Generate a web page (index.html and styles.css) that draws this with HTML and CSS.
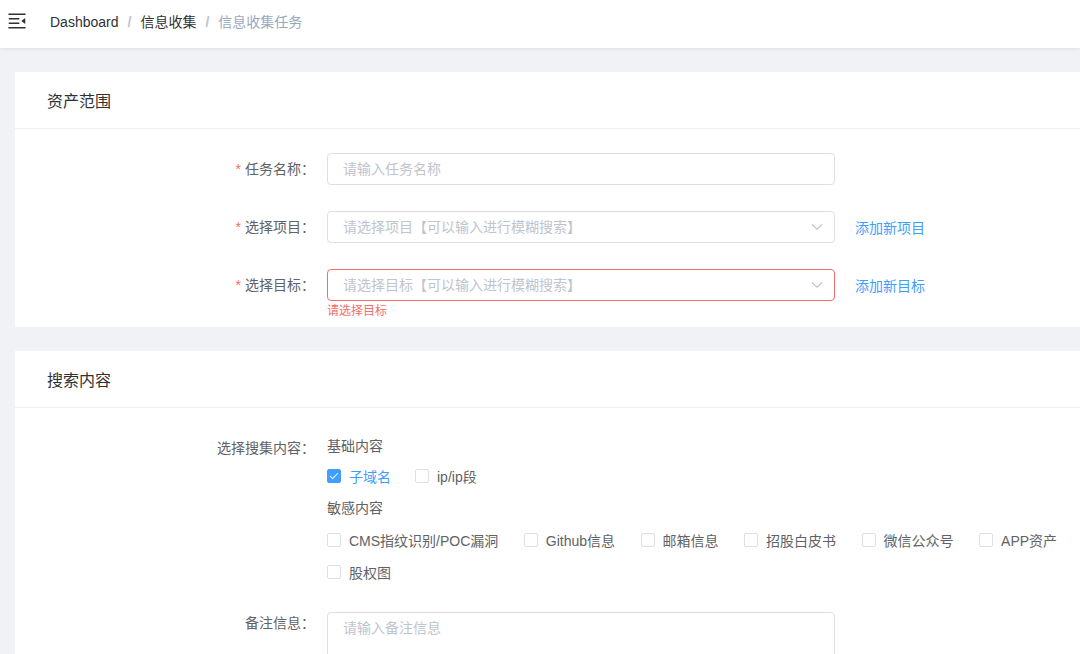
FILE: index.html
```html
<!DOCTYPE html>
<html lang="zh-CN">
<head>
<meta charset="utf-8">
<title>信息收集任务</title>
<link rel="stylesheet" href="styles.css">
</head>
<body>
<header class="navbar">
  <div class="hamburger">
    <svg class="hamburger-icon" viewBox="0 0 1024 1024" width="22" height="22">
      <path d="M408 442h480c4.4 0 8-3.6 8-8v-56c0-4.4-3.6-8-8-8H408c-4.4 0-8 3.6-8 8v56c0 4.4 3.6 8 8 8zm-8 204c0 4.4 3.6 8 8 8h480c4.4 0 8-3.6 8-8v-56c0-4.4-3.6-8-8-8H408c-4.4 0-8 3.6-8 8v56zm504-486H120c-4.4 0-8 3.6-8 8v56c0 4.4 3.6 8 8 8h784c4.4 0 8-3.6 8-8v-56c0-4.4-3.6-8-8-8zm0 632H120c-4.4 0-8 3.6-8 8v56c0 4.4 3.6 8 8 8h784c4.4 0 8-3.6 8-8v-56c0-4.4-3.6-8-8-8zM142.4 642.1L298.7 519a8.84 8.84 0 0 0 0-13.9L142.4 381.9c-5.8-4.6-14.4-.5-14.4 6.9v246.3a8.9 8.9 0 0 0 14.4 7z"/>
    </svg>
  </div>
  <nav class="breadcrumb">
    <span class="crumb">Dashboard</span><span class="sep">/</span><span class="crumb">信息收集</span><span class="sep">/</span><span class="crumb crumb-last">信息收集任务</span>
  </nav>
</header>

<main class="main">
  <section class="card">
    <div class="card-header">资产范围</div>
    <div class="card-body">
      <div class="form-item">
        <label class="form-label"><span class="req">*</span>任务名称：</label>
        <div class="form-content">
          <input class="el-input" type="text" placeholder="请输入任务名称">
        </div>
      </div>
      <div class="form-item">
        <label class="form-label"><span class="req">*</span>选择项目：</label>
        <div class="form-content row">
          <div class="select">
            <input class="el-input select-input" type="text" placeholder="请选择项目【可以输入进行模糊搜索】">
            <svg class="select-arrow" viewBox="0 0 12 8" width="12" height="8"><path d="M1 1.5 L6 6.2 L11 1.5" fill="none" stroke="#c0c4cc" stroke-width="1.2"/></svg>
          </div>
          <a class="link">添加新项目</a>
        </div>
      </div>
      <div class="form-item is-error">
        <label class="form-label"><span class="req">*</span>选择目标：</label>
        <div class="form-content">
          <div class="row">
            <div class="select">
              <input class="el-input select-input" type="text" placeholder="请选择目标【可以输入进行模糊搜索】">
              <svg class="select-arrow" viewBox="0 0 12 8" width="12" height="8"><path d="M1 1.5 L6 6.2 L11 1.5" fill="none" stroke="#c0c4cc" stroke-width="1.2"/></svg>
            </div>
            <a class="link">添加新目标</a>
          </div>
          <div class="error-msg">请选择目标</div>
        </div>
      </div>
    </div>
  </section>

  <section class="card">
    <div class="card-header">搜索内容</div>
    <div class="card-body">
      <div class="form-item form-item-checks">
        <label class="form-label">选择搜集内容：</label>
        <div class="form-content">
          <div class="group-title first">基础内容</div>
          <div class="checks">
            <label class="cb cb-checked"><span class="cb-box"></span><span class="cb-text">子域名</span></label>
            <label class="cb"><span class="cb-box"></span><span class="cb-text">ip/ip段</span></label>
          </div>
          <div class="group-title">敏感内容</div>
          <div class="checks checks-wide">
            <label class="cb"><span class="cb-box"></span><span class="cb-text">CMS指纹识别/POC漏洞</span></label>
            <label class="cb"><span class="cb-box"></span><span class="cb-text">Github信息</span></label>
            <label class="cb"><span class="cb-box"></span><span class="cb-text">邮箱信息</span></label>
            <label class="cb"><span class="cb-box"></span><span class="cb-text">招股白皮书</span></label>
            <label class="cb"><span class="cb-box"></span><span class="cb-text">微信公众号</span></label>
            <label class="cb"><span class="cb-box"></span><span class="cb-text">APP资产</span></label>
            <label class="cb"><span class="cb-box"></span><span class="cb-text">股权图</span></label>
          </div>
        </div>
      </div>
      <div class="form-item">
        <label class="form-label form-label-low">备注信息：</label>
        <div class="form-content textarea-wrap">
          <textarea class="el-textarea" placeholder="请输入备注信息"></textarea>
        </div>
      </div>
    </div>
  </section>
</main>
</body>
</html>
```

FILE: styles.css
```css
html, body {
  margin: 0;
  padding: 0;
  overflow: hidden;
}

body {
  background: #f0f2f5;
  font-family: "Liberation Sans", "Noto Sans CJK SC", sans-serif;
  font-size: 14px;
  color: #606266;
}

.navbar {
  height: 48px;
  background: #fff;
  box-shadow: 0 1px 4px rgba(0, 21, 41, 0.08);
  display: flex;
  align-items: flex-start;
  padding-left: 6px;
  position: relative;
  z-index: 2;
}

.hamburger {
  padding-top: 10px;
  height: 22px;
}

.hamburger-icon {
  display: block;
  fill: #303133;
  transform: rotate(180deg);
}

.breadcrumb {
  margin-left: 22px;
  line-height: 44px;
  font-size: 14px;
}

.crumb {
  color: #303133;
}

.crumb-last {
  color: #97a8be;
}

.sep {
  margin: 0 9px;
  color: #c0c4cc;
  font-weight: 700;
}

.main {
  padding: 24px 0 0 15px;
}

.card {
  display: flow-root;
  background: #fff;
  margin-bottom: 24px;
}

.card-header {
  height: 52px;
  line-height: 52px;
  padding: 4px 0 0 32px;
  font-size: 16px;
  color: #303133;
  border-bottom: 1px solid #ebeef5;
}

.card-body {
  display: flow-root;
  padding-top: 24px;
}

.form-item {
  display: flex;
  margin-bottom: 26px;
}

.form-item.is-error {
  margin-bottom: 10px;
}

.form-item-checks {
  margin-bottom: 17px;
}

.form-label {
  width: 312px;
  flex-shrink: 0;
  box-sizing: border-box;
  padding-right: 12px;
  text-align: right;
  line-height: 32px;
  font-size: 14px;
  color: #606266;
}

.form-label-low {
  padding-top: 2px;
}

.req {
  color: #f56c6c;
  margin-right: 4px;
}

.form-content {
  flex: 1;
  min-width: 0;
}

.row {
  display: flex;
  align-items: center;
}

.el-input {
  display: block;
  width: 508px;
  height: 32px;
  box-sizing: border-box;
  border: 1px solid #dcdfe6;
  border-radius: 4px;
  padding: 0 15px;
  font-family: inherit;
  font-size: 14px;
  color: #606266;
  background: #fff;
  outline: none;
}

.el-input::placeholder,
.el-textarea::placeholder {
  color: #c0c4cc;
}

.is-error .el-input {
  border-color: #f56c6c;
}

.select {
  position: relative;
  width: 508px;
}

.select-input {
  padding-right: 30px;
}

.select-arrow {
  position: absolute;
  right: 12px;
  top: 12px;
}

.link {
  margin-left: 20px;
  color: #409eff;
  font-size: 14px;
  cursor: pointer;
}

.error-msg {
  padding-top: 4px;
  font-size: 12px;
  line-height: 12px;
  color: #f56c6c;
}

.group-title {
  line-height: 32px;
  color: #606266;
}

.group-title.first {
  line-height: 28px;
}

.checks {
  display: flex;
  flex-wrap: wrap;
  width: 760px;
}

.cb {
  display: inline-flex;
  align-items: center;
  height: 32px;
  margin-right: 24px;
  cursor: pointer;
}

.checks-wide .cb {
  margin-right: 25.5px;
}

.cb-box {
  position: relative;
  width: 14px;
  height: 14px;
  box-sizing: border-box;
  border: 1px solid #dcdfe6;
  border-radius: 2px;
  background: #fff;
}

.cb-checked .cb-box {
  background: #409eff;
  border-color: #409eff;
}

.cb-checked .cb-box::after {
  content: "";
  position: absolute;
  left: 4px;
  top: 1px;
  width: 3px;
  height: 7px;
  border: 1px solid #fff;
  border-left: 0;
  border-top: 0;
  transform: rotate(45deg);
}

.cb-text {
  padding-left: 8px;
  font-size: 14px;
  color: #606266;
}

.cb-checked .cb-text {
  color: #409eff;
}

.textarea-wrap {
  padding-top: 7px;
}

.el-textarea {
  display: block;
  width: 508px;
  height: 80px;
  box-sizing: border-box;
  border: 1px solid #dcdfe6;
  border-radius: 4px;
  padding: 5px 15px;
  line-height: 1.5;
  font-family: inherit;
  font-size: 14px;
  color: #606266;
  resize: none;
  outline: none;
}
```
